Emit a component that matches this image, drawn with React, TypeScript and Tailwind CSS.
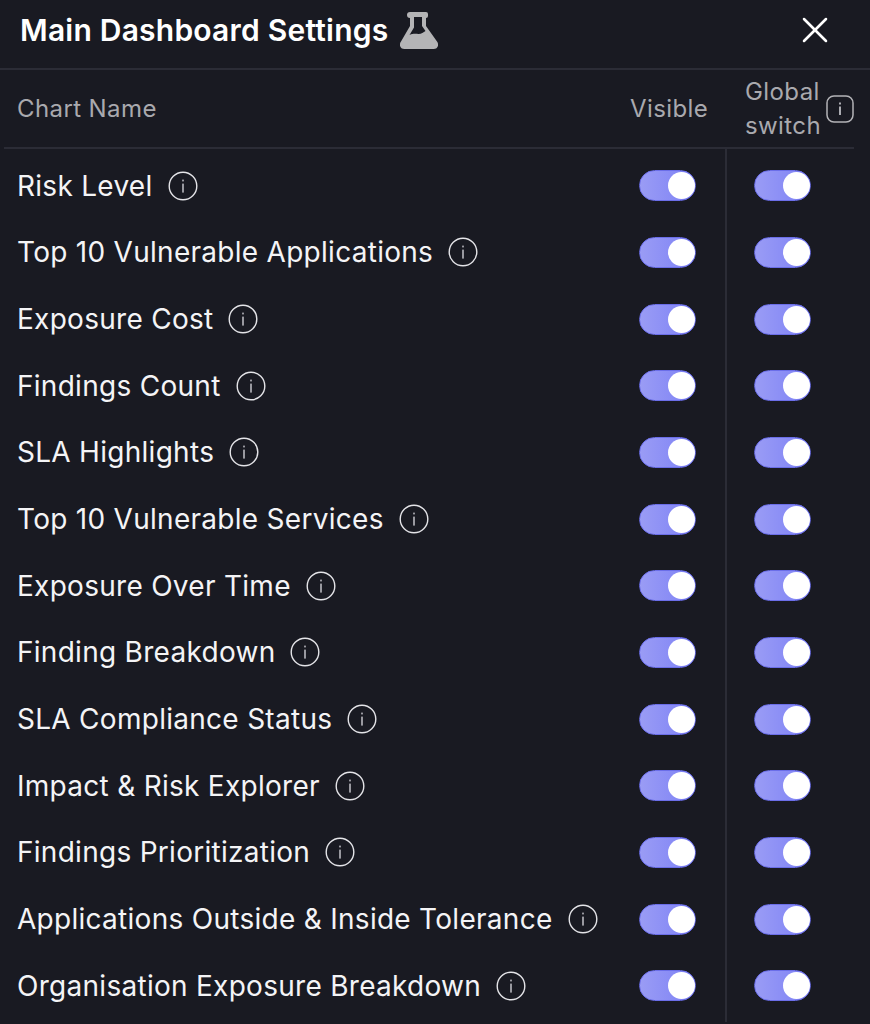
import React from "react";
import { X } from "lucide-react";

const charts = [
  "Risk Level",
  "Top 10 Vulnerable Applications",
  "Exposure Cost",
  "Findings Count",
  "SLA Highlights",
  "Top 10 Vulnerable Services",
  "Exposure Over Time",
  "Finding Breakdown",
  "SLA Compliance Status",
  "Impact & Risk Explorer",
  "Findings Prioritization",
  "Applications Outside & Inside Tolerance",
  "Organisation Exposure Breakdown",
];

const InfoCircle = () => (
  <svg width="30" height="30" viewBox="0 0 30 30" fill="none" className="shrink-0">
    <circle cx="15" cy="15" r="13.8" stroke="#e4e4e8" strokeWidth="1.4" />
    <rect x="14.3" y="12.6" width="1.4" height="9" fill="#d0d0d6" />
    <rect x="14.3" y="8.6" width="1.4" height="1.8" fill="#d0d0d6" />
  </svg>
);

const Toggle = () => (
  <div className="flex items-center justify-end shrink-0 w-[57px] h-[31px] rounded-full bg-gradient-to-r from-[#9a9cf5] to-[#7d80f5] border border-[#6b6ee8]">
    <div className="w-[27px] h-[27px] rounded-full bg-white" />
  </div>
);

const App = () => {
  return (
    <div
      className="w-[870px] h-[1024px] overflow-hidden bg-[#191a22]"
      style={{ fontFamily: "Inter, 'Liberation Sans', sans-serif" }}
    >
      <div className="flex items-center h-[70px] pl-5 pr-[33px] pb-[8px] border-b-2 border-[#2b2c36]">
        <h1 className="text-[30px] font-semibold text-white tracking-[0.22px]">Main Dashboard Settings</h1>
        <svg width="38" height="37" viewBox="0 0 38 37" className="ml-[12px]">
          <path
            fillRule="evenodd"
            fill="#b4b4b6"
            d="M10 0h16a2 2 0 0 1 2 2v2a2 2 0 0 1-2 2v8l11 15.500C39.500 33 37.500 37 33.500 37h-29C.5 37-1.500 33 1 29.500L10 14V6a2 2 0 0 1 0-6zM14 5v10.500L9.500 23c4-1.800 6.500-1 9-1 3 0 5-1.500 7-3L22 14V5z"
          />
        </svg>
        <button className="ml-auto text-white">
          <X size={44} strokeWidth={1.4} />
        </button>
      </div>

      <div className="flex items-center h-[79px] ml-1 mr-4 border-b-2 border-[#2b2c36] text-[24px] text-[#a9a9ae] tracking-[0.4px]">
        <span className="pl-[13px] flex-1">Chart Name</span>
        <span className="w-[116px]">Visible</span>
        <span className="w-[80px] ml-[-1px] mr-[1px] leading-[34px]">Global switch</span>
        <svg width="28" height="28" viewBox="0 0 28 28" fill="none">
          <rect x="1" y="1" width="26" height="26" rx="7" stroke="#b4b4b8" strokeWidth="1.5" />
          <rect x="13.200" y="11.500" width="1.600" height="8.500" fill="#d0d0d6" />
          <rect x="13.200" y="7.500" width="1.600" height="2" fill="#d0d0d6" />
        </svg>
      </div>

      <div className="flex flex-col ml-1">
        {charts.map((name, i) => {
          // first and last rows run a bit taller so the divider reaches past them
          const edge = i === 0 ? "h-[70.17px] pt-[3.5px]" : i === charts.length - 1 ? "h-[69.67px] pb-[3px]" : "h-[66.67px]";
          return (
            <div key={i} className="flex items-stretch">
              <div className={`flex items-center flex-1 pl-[13px] text-[28px] text-[#f4f4f6] tracking-[0.28px] ${edge}`}>
                <span className="mr-[15px] whitespace-nowrap">{name}</span>
                <InfoCircle />
              </div>
              <div className={`flex items-center w-[129px] border-r-2 border-[#2b2c36] pr-[29px] pl-[41px] ${edge}`}>
                <Toggle />
              </div>
              <div className={`flex items-center w-[143px] pl-[27px] ${edge}`}>
                <Toggle />
              </div>
            </div>
          );
        })}
      </div>
    </div>
  );
};

export default App;
